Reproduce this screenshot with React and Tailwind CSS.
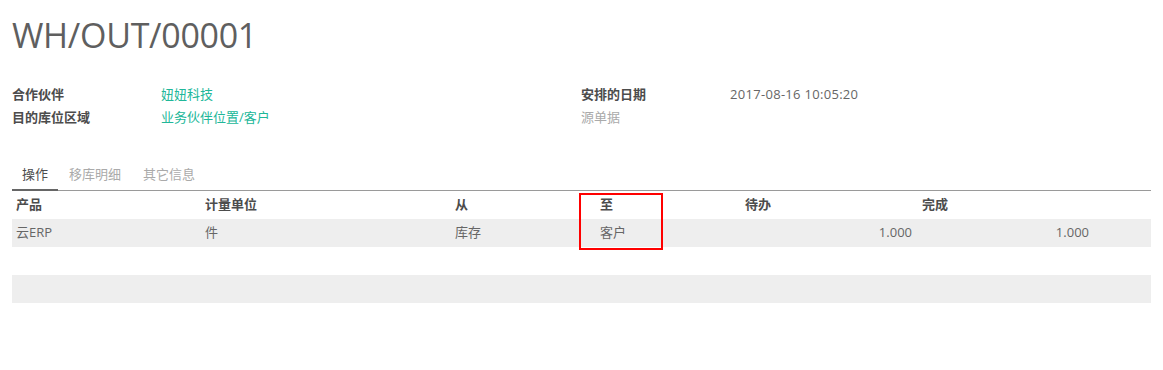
import React from 'react';

const font = { fontFamily: '"Open Sans", "Noto Sans CJK SC", sans-serif' };

const cols = 'grid grid-cols-[189px_250px_145px_145px_177px_177px_56px]';

const lines = [
    { product: '云ERP', uom: '件', from: '库存', to: '客户', todo: '1.000', done: '1.000' },
];

const Field = ({ label, value, muted, link }) => (
    <div className="flex h-[23px] items-center">
        <div className={`w-[149px] font-bold ${muted ? 'text-[#aaaaaa] font-normal' : 'text-[#4c4c4c]'}`}>
            {label}
        </div>
        <div className={link ? 'text-[#21b799]' : 'text-[#666666] tracking-[0.3px]'}>{value}</div>
    </div>
);

const App = () => {
    return (
        <div className="w-[1163px] h-[370px] bg-white px-3 text-[13px] text-[#666666] relative" style={font}>
            <h1 className="pt-[13px] text-[34px] leading-[44px] text-[#5f5f5f] tracking-[-0.3px]">WH/OUT/00001</h1>

            <div className="mt-[26px] flex">
                <div className="w-[569px]">
                    <Field label="合作伙伴" value="妞妞科技" link />
                    <Field label="目的库位区域" value="业务伙伴位置/客户" link />
                </div>
                <div>
                    <Field label="安排的日期" value="2017-08-16 10:05:20" />
                    <Field label="源单据" value="" muted />
                </div>
            </div>

            <div className="mt-[31px] flex border-b border-[#9a9a9a] h-[31px] items-center">
                <div className="h-full px-[10px] flex items-center text-[#4c4c4c] border-b-2 border-[#666666] -mb-[1px] mt-[1px]">
                    操作
                </div>
                <div className="px-[11px] text-[#aaaaaa]">移库明细</div>
                <div className="px-[11px] text-[#aaaaaa]">其它信息</div>
            </div>

            <div className={`${cols} h-[28px] items-center font-bold text-[#4c4c4c]`}>
                <div className="px-1">产品</div>
                <div className="px-1">计量单位</div>
                <div className="px-1">从</div>
                <div className="px-1">至</div>
                <div className="px-1">待办</div>
                <div className="px-1">完成</div>
                <div />
            </div>
            {lines.map((el, id) => (
                <div key={id} className={`${cols} h-[28px] items-center bg-[#eeeeee]`}>
                    <div className="px-1">{el.product}</div>
                    <div className="px-1">{el.uom}</div>
                    <div className="px-1">{el.from}</div>
                    <div className="px-1">{el.to}</div>
                    <div className="px-[6px] text-right">{el.todo}</div>
                    <div className="px-[6px] text-right">{el.done}</div>
                    <div />
                </div>
            ))}
            <div className="h-[28px]" />
            <div className="h-[28px] bg-[#eeeeee]" />

            {/* annotation */}
            <div className="absolute left-[579px] top-[193px] w-[84px] h-[57px] border-2 border-[#ff0000]" />
        </div>
    );
};

export default App;
